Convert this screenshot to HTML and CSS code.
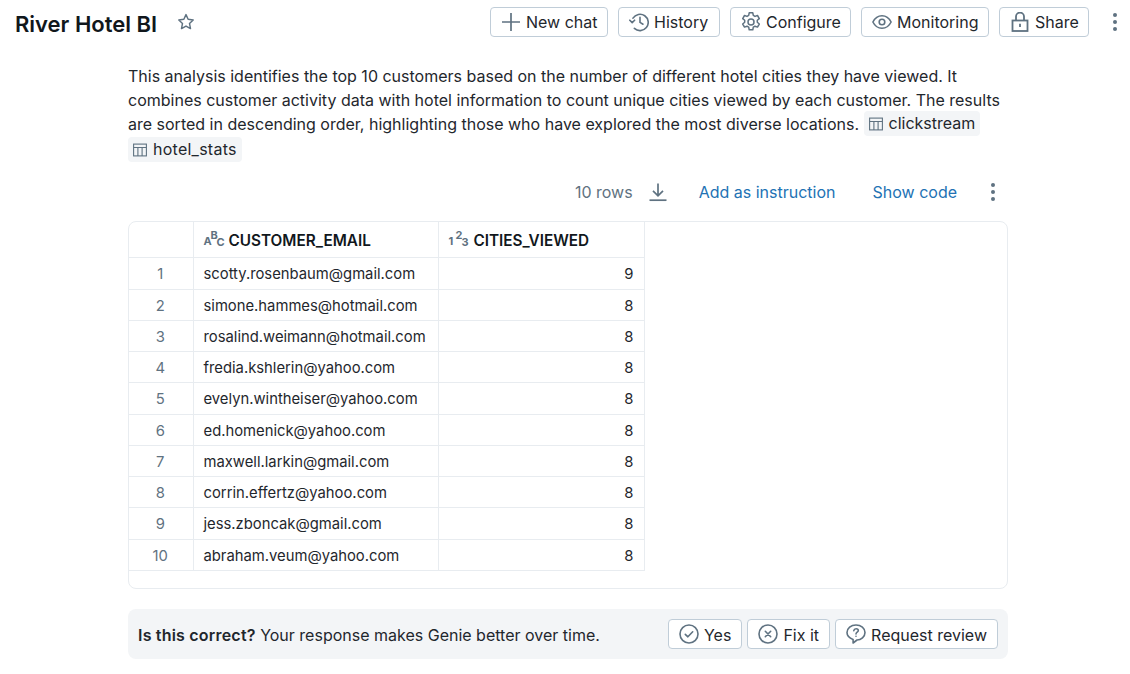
FILE: index.html
```html
<!DOCTYPE html>
<html lang="en">
<head>
  <meta charset="UTF-8">
  <title>River Hotel BI</title>
  <link rel="stylesheet" href="styles.css">
</head>
<body>

  <header class="topbar">
    <div class="title-group">
      <h1>River Hotel BI</h1>
      <svg class="star" width="18" height="18" viewBox="0 0 16 16" fill="none" stroke="#5f7281" stroke-width="1.3" stroke-linejoin="round"><path d="M8 1.400l1.900 4.200 4.500.6-3.300 3.100.9 4.500L8 11.600l-4 2.200.9-4.500-3.300-3.100 4.500-.6z"/></svg>
    </div>
    <div class="top-actions">
      <button class="btn btn-new">
        <svg width="20" height="20" viewBox="0 0 20 20" fill="none" stroke="#5f7281" stroke-width="1.700"><path d="M10 1v18M1 10h18"/></svg>
        New chat
      </button>
      <button class="btn btn-history">
        <svg width="20" height="20" viewBox="0 0 20 20" fill="none" stroke="#5f7281" stroke-width="1.600" stroke-linecap="round" stroke-linejoin="round"><path d="M4 6.200A8.200 8.200 0 1 1 5.400 16.400"/><path d="M.8 8.200l2.400 2.400 2.400-2.400"/><path d="M11 5.400v5l3 1.800"/></svg>
        History
      </button>
      <button class="btn btn-config">
        <svg width="20" height="20" viewBox="0 0 20 20" fill="none" stroke="#5f7281" stroke-width="1.500" stroke-linejoin="round"><path d="M8.200.8h3.600l.5 2.600 1.700 1 2.500-.9 1.800 3.100-2 1.700v2l2 1.700-1.800 3.100-2.500-.9-1.700 1-.5 2.600H8.200l-.5-2.600-1.700-1-2.500.9-1.800-3.100 2-1.700v-2l-2-1.700 1.800-3.100 2.500.9 1.700-1z"/><circle cx="10" cy="10" r="3"/></svg>
        Configure
      </button>
      <button class="btn btn-monitor">
        <svg width="20" height="20" viewBox="0 0 20 20" fill="none" stroke="#5f7281" stroke-width="1.600"><path d="M.9 10C3 5.800 6.200 3.700 10 3.700s7 2.100 9.100 6.300c-2.100 4.200-5.300 6.300-9.100 6.300S3 14.200.9 10z"/><circle cx="10" cy="10" r="2.800"/></svg>
        Monitoring
      </button>
      <button class="btn btn-share">
        <svg width="20" height="20" viewBox="0 0 20 20" fill="none" stroke="#5f7281" stroke-width="1.800"><rect x="2.500" y="8.500" width="15" height="10.500"/><path d="M6 8.500V4.600a4 4 0 0 1 8 0v3.900"/><path d="M10 11.800v3.200"/></svg>
        Share
      </button>
      <button class="kebab top-kebab" aria-label="More">
        <span></span><span></span><span></span>
      </button>
    </div>
  </header>

  <main class="content">
    <p class="summary">
      This analysis identifies the top 10 customers based on the number of different hotel cities they have viewed. It combines customer activity data with hotel information to count unique cities viewed by each customer. The results are sorted in descending order, highlighting those who have explored the most diverse locations.
      <span class="chip"><svg width="14" height="14" viewBox="0 0 14 14" fill="none" stroke="#5f7281" stroke-width="1.100"><rect x=".6" y="1.100" width="12.800" height="11.800"/><path d="M.6 4.500h12.800M4.900 4.500v8.400M9.100 4.500v8.400"/></svg>clickstream</span>
      <span class="chip chip-hotel"><svg width="14" height="14" viewBox="0 0 14 14" fill="none" stroke="#5f7281" stroke-width="1.100"><rect x=".6" y="1.100" width="12.800" height="11.800"/><path d="M.6 4.500h12.800M4.900 4.500v8.400M9.100 4.500v8.400"/></svg>hotel_stats</span>
    </p>

    <div class="result-bar">
      <span class="row-count">10 rows</span>
      <svg class="download" width="20" height="20" viewBox="0 0 20 20" fill="none" stroke="#5f7281" stroke-width="1.700"><path d="M10 1.500v12M5 8.800l5 5 5-5"/><path d="M1.500 18.200h17"/></svg>
      <a class="link link-instr" href="#">Add as instruction</a>
      <a class="link link-code" href="#">Show code</a>
      <button class="kebab" aria-label="More">
        <span></span><span></span><span></span>
      </button>
    </div>

    <div class="table-card">
      <table>
        <thead>
          <tr>
            <th class="col-idx"></th>
            <th class="col-email"><span class="type-icon"><i class="a">A</i><i class="b">B</i><i class="c">C</i></span>CUSTOMER_EMAIL</th>
            <th class="col-num"><span class="type-icon"><i class="a">1</i><i class="b">2</i><i class="c">3</i></span>CITIES_VIEWED</th>
          </tr>
        </thead>
        <tbody>
          <tr class="tall"><td class="idx">1</td><td>scotty.rosenbaum@gmail.com</td><td class="num">9</td></tr>
          <tr><td class="idx">2</td><td>simone.hammes@hotmail.com</td><td class="num">8</td></tr>
          <tr><td class="idx">3</td><td>rosalind.weimann@hotmail.com</td><td class="num">8</td></tr>
          <tr><td class="idx">4</td><td>fredia.kshlerin@yahoo.com</td><td class="num">8</td></tr>
          <tr class="tall"><td class="idx">5</td><td>evelyn.wintheiser@yahoo.com</td><td class="num">8</td></tr>
          <tr><td class="idx">6</td><td>ed.homenick@yahoo.com</td><td class="num">8</td></tr>
          <tr><td class="idx">7</td><td>maxwell.larkin@gmail.com</td><td class="num">8</td></tr>
          <tr><td class="idx">8</td><td>corrin.effertz@yahoo.com</td><td class="num">8</td></tr>
          <tr class="tall"><td class="idx">9</td><td>jess.zboncak@gmail.com</td><td class="num">8</td></tr>
          <tr><td class="idx">10</td><td>abraham.veum@yahoo.com</td><td class="num">8</td></tr>
        </tbody>
      </table>
    </div>

    <div class="feedback">
      <p><strong>Is this correct?</strong> Your response makes Genie better over time.</p>
      <div class="feedback-actions">
        <button class="btn btn-yes">
          <svg width="20" height="20" viewBox="0 0 20 20" fill="none" stroke="#5f7281" stroke-width="1.600" stroke-linecap="round" stroke-linejoin="round"><circle cx="10" cy="10" r="9"/><path d="M6.300 10.300l2.600 2.500 4.800-5"/></svg>
          <span>Yes</span>
        </button>
        <button class="btn btn-fix">
          <svg width="20" height="20" viewBox="0 0 20 20" fill="none" stroke="#5f7281" stroke-width="1.600" stroke-linecap="round"><circle cx="10" cy="10" r="9"/><path d="M7.300 7.300l5.400 5.400M12.700 7.300l-5.400 5.400"/></svg>
          <span>Fix it</span>
        </button>
        <button class="btn btn-review">
          <svg width="20" height="20" viewBox="0 0 20 20" fill="none" stroke="#5f7281" stroke-width="1.600" stroke-linecap="round" stroke-linejoin="round"><path d="M10 1c5 0 9 3.200 9 7.600s-4 7.400-8 7.400l-3.900 3v-3.500C4 14.400 1 12 1 8.600 1 4.200 5 1 10 1z"/><path d="M7.800 6.600c.2-1.200 1.100-1.900 2.300-1.900s2.200.8 2.200 1.900c0 1.600-2.300 1.600-2.300 3.300"/><path d="M10 12.200v.1"/></svg>
          <span>Request review</span>
        </button>
      </div>
    </div>
  </main>

</body>
</html>
```

FILE: styles.css
```css
* {
  box-sizing: border-box;
}

body {
  margin: 0;
  font-family: Inter, 'Liberation Sans', sans-serif;
  font-size: 16px;
  color: #1f272d;
  background: #fff;
}

.topbar {
  display: flex;
  justify-content: space-between;
  align-items: center;
  height: 43px;
  padding: 0 0 0 15px;
}

.title-group {
  display: flex;
  align-items: center;
  gap: 20px;
  margin-top: 4px;
}

h1 {
  margin: 0;
  font-size: 22px;
  font-weight: 600;
  line-height: 36px;
  color: #11171c;
}

.star {
  margin-top: -3px;
}

.top-actions {
  display: flex;
  align-items: center;
  gap: 10px;
}

.btn {
  display: flex;
  flex-shrink: 0;
  align-items: center;
  gap: 5px;
  height: 30px;
  padding: 0 10px;
  font-family: inherit;
  font-size: 16px;
  white-space: nowrap;
  color: #1f272d;
  background: #fff;
  border: 1px solid #c0cdd8;
  border-radius: 4px;
}

.btn svg {
  flex-shrink: 0;
}

.btn-new {
  width: 118px;
}

.btn-history {
  width: 102px;
}

.btn-config {
  width: 121px;
}

.btn-monitor {
  width: 128px;
}

.btn-share {
  width: 90px;
}

.kebab {
  display: flex;
  flex-direction: column;
  align-items: center;
  gap: 3px;
  width: 16px;
  padding: 0;
  background: none;
  border: none;
}

.kebab span {
  width: 4px;
  height: 4px;
  border-radius: 50%;
  background: #5f7281;
}

.top-kebab {
  margin: 0 7px 0 8px;
}

.content {
  width: 880px;
  margin-left: 128px;
}

.summary {
  margin: 21px 0 0;
  font-size: 16px;
  line-height: 24px;
}

.chip {
  display: inline-block;
  margin: -3px 0 2px;
  padding: 2px 5px;
  line-height: 21px;
  vertical-align: 1px;
  background: #f3f5f7;
  border-radius: 4px;
}

.chip-hotel {
  letter-spacing: .25px;
}

.chip svg {
  margin-right: 6px;
  vertical-align: -2px;
}

.result-bar {
  display: flex;
  align-items: center;
  justify-content: flex-end;
  height: 32px;
  margin-top: 12px;
}

.row-count {
  color: #5f7281;
}

.download {
  margin-left: 15px;
}

.link {
  color: #2272b4;
  text-decoration: none;
}

.link-instr {
  margin-left: 31px;
}

.link-code {
  margin-left: 37px;
}

.result-bar .kebab {
  margin: 0 7px 0 28px;
}

.table-card {
  height: 368px;
  margin-top: 13px;
  overflow: hidden;
  border: 1px solid #e8ecf0;
  border-radius: 8px;
}

table {
  border-collapse: collapse;
  table-layout: fixed;
  width: 515px;
  font-size: 14.8px;
}

th {
  height: 35px;
  padding: 2px 10px 0;
  font-size: 15.3px;
  font-weight: 600;
  white-space: nowrap;
  text-align: left;
  color: #11171c;
  border-right: 1px solid #e8ecf0;
  border-bottom: 1px solid #e8ecf0;
}

td {
  height: 31px;
  padding: 2px 10px 0;
  border-right: 1px solid #e8ecf0;
  border-bottom: 1px solid #e8ecf0;
}

tr.tall td {
  height: 32px;
}

.col-idx {
  width: 64px;
}

.col-email {
  width: 245px;
}

.col-num {
  width: 206px;
}

td.idx {
  text-align: center;
  color: #5f7281;
  padding-right: 1px;
  padding-left: 0;
}

.num {
  text-align: right;
}

.type-icon {
  position: relative;
  display: inline-block;
  width: 20px;
  height: 18px;
  margin-right: 5px;
  vertical-align: -2px;
}

.type-icon i {
  position: absolute;
  font-style: normal;
  font-size: 11px;
  font-weight: 700;
  line-height: 11px;
  color: #5f7281;
}

.type-icon .a {
  left: 0;
  bottom: 1px;
}

.type-icon .b {
  left: 7px;
  top: 0;
}

.type-icon .c {
  left: 13px;
  bottom: 0;
}

.feedback {
  display: flex;
  align-items: center;
  justify-content: space-between;
  height: 50px;
  margin-top: 20px;
  padding: 0 10px;
  background: #f3f5f7;
  border-radius: 8px;
}

.feedback p {
  margin: 0;
  padding-top: 2px;
}

.feedback strong {
  font-weight: 600;
  letter-spacing: .2px;
}

.feedback-actions {
  display: flex;
  gap: 5px;
}

.feedback-actions span {
  padding-top: 2px;
}
```
